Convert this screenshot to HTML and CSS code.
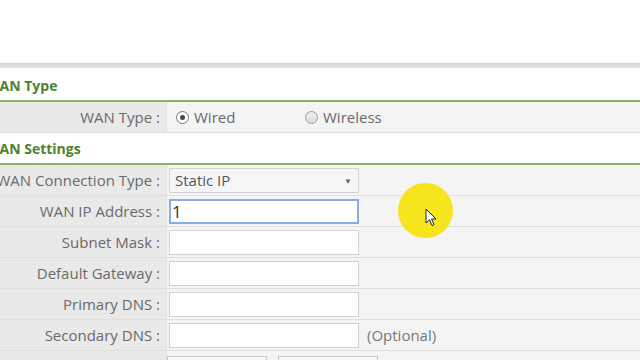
FILE: index.html
```html
<!DOCTYPE html>
<html lang="en">
<head>
  <meta charset="UTF-8" />
  <title>WAN Settings</title>
  <link rel="stylesheet" href="styles.css">
</head>
<body>
  <!-- Header area (blank) -->
  <div class="top"></div>
  <div class="top-bar"></div>

  <div class="page">
    <!-- WAN Type -->
    <h2 class="section-title first">WAN Type</h2>
    <div class="row">
      <div class="label">WAN Type :</div>
      <div class="value">
        <label class="radio wired"><span class="dot checked"></span>Wired</label>
        <label class="radio"><span class="dot"></span>Wireless</label>
      </div>
    </div>

    <!-- WAN Settings -->
    <h2 class="section-title">WAN Settings</h2>
    <div class="row">
      <div class="label">WAN Connection Type :</div>
      <div class="value">
        <div class="select">Static IP<span class="arrow">&#9660;</span></div>
      </div>
    </div>
    <div class="row">
      <div class="label">WAN IP Address :</div>
      <div class="value"><div class="field focused">1</div></div>
    </div>
    <div class="row">
      <div class="label">Subnet Mask :</div>
      <div class="value"><div class="field"></div></div>
    </div>
    <div class="row">
      <div class="label">Default Gateway :</div>
      <div class="value"><div class="field"></div></div>
    </div>
    <div class="row">
      <div class="label">Primary DNS :</div>
      <div class="value"><div class="field"></div></div>
    </div>
    <div class="row">
      <div class="label">Secondary DNS :</div>
      <div class="value"><div class="field"></div><span class="hint">(Optional)</span></div>
    </div>
    <div class="row buttons-row">
      <div class="label"></div>
      <div class="value">
        <div class="btn"></div>
        <div class="btn"></div>
      </div>
    </div>
  </div>

  <!-- Cursor highlight -->
  <div class="highlight"></div>
  <svg class="cursor" width="12" height="19" viewBox="0 0 12 19">
    <path d="M1 1 L1 15 L4.5 11.8 L7 17.5 L9 16.6 L6.6 11 L11 11 Z" fill="#fff" stroke="#222" stroke-width="1" stroke-linejoin="round"/>
  </svg>
</body>
</html>
```

FILE: styles.css
```css
html,
body {
  margin: 0;
  padding: 0;
  height: 100%;
  background: #fff;
  font-family: "Open Sans", "Noto Sans", sans-serif;
  font-size: 15px;
  color: #6a6a6a;
  overflow: hidden;
}

/* =============== HEADER =============== */
.top {
  height: 63px;
  background: #fff;
}
.top-bar {
  height: 5px;
  background: linear-gradient(#d4d4d4, #e6e6e6);
}

.page {
  margin-left: -14px;
}

/* =============== SECTIONS =============== */
.section-title {
  margin: 0;
  height: 30px;
  line-height: 32px;
  font-size: 14px;
  font-weight: 700;
  color: #4c8230;
  border-bottom: 2px solid #86b466;
  overflow: hidden;
}
.section-title.first {
  margin-top: 2px;
}

.row {
  display: flex;
  height: 30px;
  border-bottom: 1px solid #e0e0e0;
}
.label {
  width: 181px;
  flex: none;
  box-sizing: border-box;
  padding-right: 6px;
  text-align: right;
  line-height: 30px;
  background: #e9e9e9;
  border-right: 1px solid #e4e4e4;
  white-space: nowrap;
}
.value {
  flex: 1;
  display: flex;
  align-items: center;
  padding-left: 2px;
  background: #f4f4f4;
}

/* =============== RADIOS =============== */
.radio {
  display: flex;
  align-items: center;
  gap: 5px;
}
.radio.wired {
  width: 129px;
  margin-left: 7px;
}
.dot {
  width: 11px;
  height: 11px;
  border: 1px solid #9a9a9a;
  border-radius: 50%;
  background: linear-gradient(#f0f0f0, #dcdcdc);
  position: relative;
}
.dot.checked {
  background: #fff;
  border-color: #777;
}
.dot.checked::after {
  content: "";
  position: absolute;
  left: 3px;
  top: 3px;
  width: 5px;
  height: 5px;
  border-radius: 50%;
  background: #444;
}

/* =============== FIELDS =============== */
.select,
.field {
  width: 190px;
  height: 25px;
  box-sizing: border-box;
  border: 1px solid #d2d2d2;
  background: #fff;
}
.select {
  position: relative;
  background: #f6f6f6;
  padding-left: 5px;
  line-height: 23px;
  color: #555;
}
.arrow {
  position: absolute;
  right: 6px;
  top: 0;
  font-size: 8px;
  color: #666;
}
.field.focused {
  border: 2px solid #88ade0;
  padding-left: 1px;
  font-size: 17px;
  line-height: 21px;
  color: #333;
}
.hint {
  margin-left: 8px;
  color: #777;
}

/* =============== BUTTONS =============== */
.buttons-row .value {
  align-items: flex-start;
  padding-top: 5px;
  gap: 11px;
  padding-left: 0;
}
.btn {
  width: 100px;
  height: 24px;
  box-sizing: border-box;
  border: 1px solid #c8c8c8;
  background: linear-gradient(#fafafa, #e8e8e8);
}

/* =============== CURSOR OVERLAY =============== */
.highlight {
  position: absolute;
  left: 398px;
  top: 183px;
  width: 55px;
  height: 55px;
  border-radius: 50%;
  background: #f6e41c;
}
.cursor {
  position: absolute;
  left: 425px;
  top: 208px;
}
```
